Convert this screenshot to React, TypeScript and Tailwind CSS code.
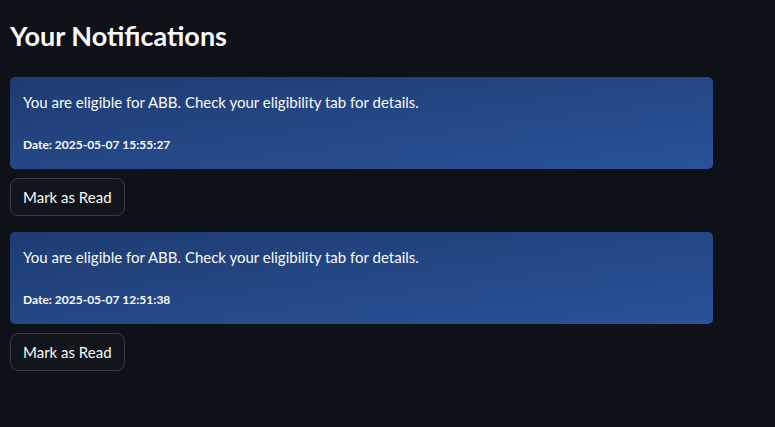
const notifications = [
  { message: "You are eligible for ABB. Check your eligibility tab for details.", date: "2025-05-07 15:55:27" },
  { message: "You are eligible for ABB. Check your eligibility tab for details.", date: "2025-05-07 12:51:38" },
];

const App = () => {
  return (
    <div className="min-h-screen w-full bg-[#0e1117] text-[#fafafa] px-[10px] pt-[18px] font-['Lato',sans-serif]">
      <h1 className="text-[27px] font-bold leading-[36px] mb-[23px]">Your Notifications</h1>
      <div className="flex flex-col w-[703px]">
        {notifications.map((n, i) => (
          <div key={i} className="flex flex-col mb-[16px]">
            <div className="rounded-[5px] h-[92px] bg-gradient-to-br from-[#1e3c72] to-[#2a5298] px-[13px] pt-[14px]">
              <p className="text-[15px] leading-[22px]">{n.message}</p>
              <p className="text-[12px] font-bold leading-[16px] mt-[24px]">Date: {n.date}</p>
            </div>
            <button className="mt-[9px] self-start h-[38px] px-[12px] rounded-[8px] border border-[#3a3d45] bg-[#12151c] text-[15px] leading-[20px]">
              Mark as Read
            </button>
          </div>
        ))}
      </div>
    </div>
  );
};

export default App;
